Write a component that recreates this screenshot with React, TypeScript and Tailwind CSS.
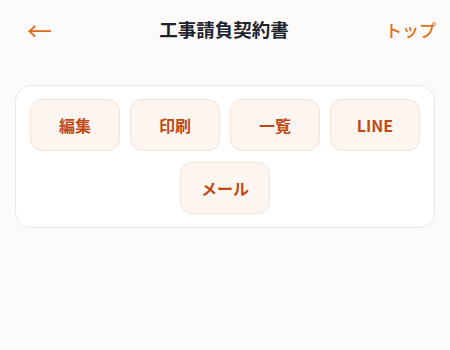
const actions = ['編集', '印刷', '一覧', 'LINE', 'メール'];

export default function App() {
  return (
    <div
      className="min-h-[350px] w-full bg-[#fdfbf9]"
      style={{ fontFamily: '"Noto Sans CJK JP", "Noto Sans", sans-serif' }}
    >
      {/* Header */}
      <div className="flex h-[60px] items-center justify-between px-[14px]">
        <button className="w-[50px] pl-[13px] text-left text-[25px] leading-none text-[#e06a1b]">←</button>
        <h1 className="text-[18.5px] font-bold text-[#1e2330]">工事請負契約書</h1>
        <button className="w-[52px] text-right text-[17px] font-medium text-[#e0701f]">トップ</button>
      </div>

      {/* Actions */}
      <div className="mx-[15px] mt-[25px] rounded-[16px] border border-[#ece7e2] bg-white px-[14px] py-[13px]">
        <div className="flex flex-wrap justify-center gap-x-[10px] gap-y-[11px]">
          {actions.map((a) => (
            <button
              key={a}
              className="flex h-[52px] w-[90px] items-center justify-center rounded-[12px] border border-[#f3e3d8] bg-[#fdf5ef] text-[16px] font-bold text-[#bf4a17]"
            >
              {a}
            </button>
          ))}
        </div>
      </div>
    </div>
  );
}
